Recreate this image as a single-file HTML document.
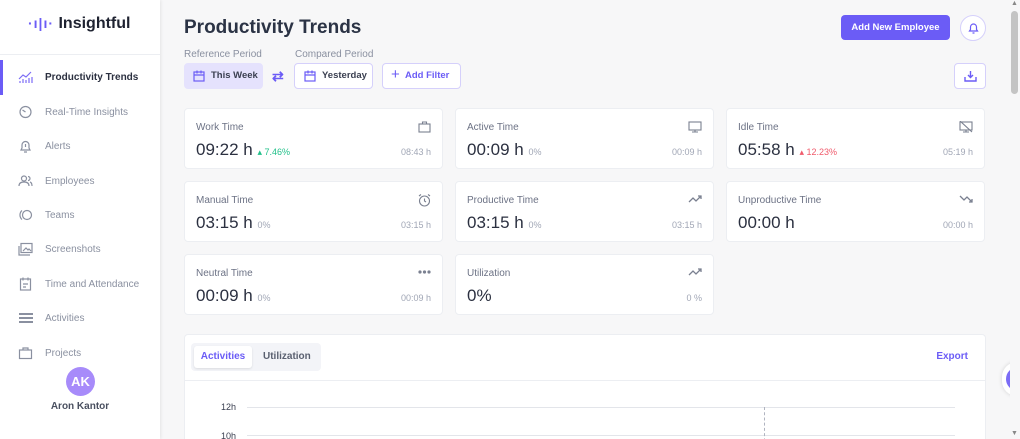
<!DOCTYPE html>
<html style="overflow:hidden;width:1020px;height:439px"><head><meta charset="utf-8"><style>
*{box-sizing:border-box;margin:0;padding:0}
body{width:1020px;height:439px;overflow:hidden;background:#f7f7f8;font-family:"Liberation Sans",sans-serif;color:#2b3040;position:relative}
.side{position:absolute;left:0;top:0;width:160px;height:439px;background:#fff;box-shadow:1px 0 3px rgba(0,0,0,.08)}
.logo{position:absolute;left:28px;top:15px;font-size:16px;font-weight:bold;color:#1e2230;white-space:nowrap}
.sep{position:absolute;left:0;top:54px;width:160px;border-top:1px solid #eceef2}
.nav{position:absolute;left:0;width:160px;height:20px;font-size:10px;color:#8a90a0;white-space:nowrap}
.nav .ic{position:absolute;left:18px;top:2px;width:15px;height:14px}
.nav span{position:absolute;left:45px;top:4px}
.act{color:#2b3040;font-weight:bold}
.bar{position:absolute;left:0;top:60px;width:3px;height:35px;background:#6b5cf6}
.av{position:absolute;left:66px;top:367px;width:29px;height:29px;border-radius:50%;background:#a78bfa;color:#fff;font-size:13px;font-weight:bold;text-align:center;line-height:29px}
.name{position:absolute;left:0;width:160px;top:401px;text-align:center;font-size:10px;font-weight:bold;color:#4a5060}
h1{position:absolute;left:184px;top:17px;font-size:19px;font-weight:bold;color:#2b3345}
.lbl{position:absolute;top:49px;font-size:10px;color:#8a90a0}
.btn{position:absolute;top:63px;height:26px;border:1px solid #d5d0fb;border-radius:4px;background:#fff;font-size:9.5px;font-weight:bold;color:#3a3f50;line-height:24px;white-space:nowrap}
.card{position:absolute;background:#fff;border:1px solid #eceef2;border-radius:4px;width:259px;height:61px}
.card .t{position:absolute;left:11px;top:13px;font-size:10px;color:#6c7285}
.card .v{position:absolute;left:11px;top:31px;font-size:17px;color:#2b3040}
.card .v small{font-size:9px;color:#a0a6b5}
.card .c{position:absolute;right:11px;top:38px;font-size:9px;color:#a0a6b5}
.card svg{position:absolute;right:11px;top:12px}
.up{color:#22c08a!important}.dn{color:#f05a6b!important}
</style></head><body>
<div class="side">
<div class="logo"><span style="color:#6b5cf6;font-size:14px;letter-spacing:1px">·ı|ı·</span> Insightful</div>
<div class="sep"></div>
<div class="bar"></div>
<div class="nav act" style="top:68px"><svg class="ic" viewBox="0 0 15 14" fill="none" stroke="#7b6cf6" stroke-width="1.2"><path d="M1 9l4-4 3 2 5-5"/><path d="M2 13v-2M5 13v-4M8 13v-3M11 13v-5M14 13v-6"/></svg><span>Productivity Trends</span></div>
<div class="nav" style="top:103px"><svg class="ic" viewBox="0 0 15 14" fill="none" stroke="#8a90a0" stroke-width="1.2"><circle cx="7.5" cy="7" r="5.5"/><path d="M7.5 7l-3-2"/></svg><span>Real-Time Insights</span></div>
<div class="nav" style="top:137px"><svg class="ic" viewBox="0 0 15 14" fill="none" stroke="#8a90a0" stroke-width="1.2"><path d="M3 11h9l-1-2V6a3.5 3.5 0 0 0-7 0v3zM6 13h3M7.5 5v3"/></svg><span>Alerts</span></div>
<div class="nav" style="top:172px"><svg class="ic" viewBox="0 0 15 14" fill="none" stroke="#8a90a0" stroke-width="1.2"><circle cx="6" cy="4.5" r="2.5"/><path d="M1 12c0-3 2-4 5-4s5 1 5 4M10 2.5a2 2 0 0 1 0 4M12 8c1.5.5 2 2 2 4"/></svg><span>Employees</span></div>
<div class="nav" style="top:206px"><svg class="ic" viewBox="0 0 15 14" fill="none" stroke="#8a90a0" stroke-width="1.2"><circle cx="9" cy="7" r="4.5"/><path d="M4 2.5a6 6 0 0 0 0 9"/></svg><span>Teams</span></div>
<div class="nav" style="top:240px"><svg class="ic" viewBox="0 0 15 14" fill="none" stroke="#8a90a0" stroke-width="1.2"><rect x="3" y="1.5" width="11" height="9"/><path d="M1 4v9h11M5 9l3-3 2 2 1-1 2 2"/></svg><span>Screenshots</span></div>
<div class="nav" style="top:275px"><svg class="ic" viewBox="0 0 15 14" fill="none" stroke="#8a90a0" stroke-width="1.2"><rect x="2.5" y="2" width="10" height="11"/><path d="M5 0.5v3M10 0.5v3M5 7h5M5 10h3"/></svg><span>Time and Attendance</span></div>
<div class="nav" style="top:309px"><svg class="ic" viewBox="0 0 15 14" fill="none" stroke="#8a90a0" stroke-width="2"><path d="M1 3h14M1 7h14M1 11h14"/></svg><span>Activities</span></div>
<div class="nav" style="top:344px"><svg class="ic" viewBox="0 0 15 14" fill="none" stroke="#8a90a0" stroke-width="1.2"><rect x="1.5" y="4" width="12" height="8.5"/><path d="M5 4V2h5v2"/></svg><span>Projects</span></div>
<div class="av">AK</div>
<div class="name">Aron Kantor</div>
</div>

<h1>Productivity Trends</h1>
<div class="lbl" style="left:184px">Reference Period</div>
<div class="lbl" style="left:295px">Compared Period</div>
<div class="btn" style="left:184px;width:79px;background:#e5e2fd;border-color:#e5e2fd;padding-left:26px">This Week<svg style="position:absolute;left:8px;top:6px" width="12" height="12" viewBox="0 0 12 12" fill="none" stroke="#6b5cf6" stroke-width="1.2"><rect x="1" y="2" width="10" height="9"/><path d="M1 5h10M4 0.5v3M8 0.5v3"/></svg></div>
<div style="position:absolute;left:272px;top:68px;color:#6b5cf6;font-size:14px;font-weight:bold">⇄</div>
<div class="btn" style="left:294px;width:79px;padding-left:27px">Yesterday<svg style="position:absolute;left:9px;top:6px" width="12" height="12" viewBox="0 0 12 12" fill="none" stroke="#6b5cf6" stroke-width="1.2"><rect x="1" y="2" width="10" height="9"/><path d="M1 5h10M4 0.5v3M8 0.5v3"/></svg></div>
<div class="btn" style="left:382px;width:79px;padding-left:22px;color:#6b5cf6"><span style="position:absolute;left:8px;top:-1px;font-size:15px;font-weight:normal">+</span>Add Filter</div>
<div style="position:absolute;left:841px;top:15px;width:109px;height:25px;background:#6b5cf6;border-radius:4px;color:#fff;font-size:9.5px;font-weight:bold;text-align:center;line-height:25px;white-space:nowrap">Add New Employee</div>
<div style="position:absolute;left:960px;top:15px;width:26px;height:26px;border-radius:50%;border:1px solid #d5d0fb;background:#fff"><svg style="position:absolute;left:7px;top:6px" width="11" height="12" viewBox="0 0 11 12" fill="none" stroke="#6b5cf6" stroke-width="1.2"><path d="M1.5 9h8l-1-1.5V5a3 3 0 0 0-6 0v2.5zM4.5 11h2"/></svg></div>
<div class="btn" style="left:954px;width:32px"><svg style="position:absolute;left:9px;top:6px" width="13" height="12" viewBox="0 0 13 12" fill="none" stroke="#6b5cf6" stroke-width="1.4"><path d="M6.5 1v6M4 5l2.5 2.5L9 5M1 7v4h11V7"/></svg></div>

<div class="card" style="left:184px;top:108px"><div class="t">Work Time</div><svg width="13" height="12" viewBox="0 0 13 12" fill="none" stroke="#7a8090" stroke-width="1.1"><rect x="1" y="3" width="11" height="8"/><path d="M4.5 3V1h4v2"/></svg><div class="v">09:22 h <small class="up">▴ 7.46%</small></div><div class="c">08:43 h</div></div>
<div class="card" style="left:455px;top:108px"><div class="t">Active Time</div><svg width="14" height="12" viewBox="0 0 14 12" fill="none" stroke="#7a8090" stroke-width="1.1"><rect x="1" y="1" width="12" height="8"/><path d="M7 9v2M4 11h6"/></svg><div class="v">00:09 h <small>0%</small></div><div class="c">00:09 h</div></div>
<div class="card" style="left:726px;top:108px"><div class="t">Idle Time</div><svg width="14" height="12" viewBox="0 0 14 12" fill="none" stroke="#7a8090" stroke-width="1.1"><rect x="1" y="1" width="12" height="8"/><path d="M7 9v2M4 11h6M1 0l12 11"/></svg><div class="v">05:58 h <small class="dn">▴ 12.23%</small></div><div class="c">05:19 h</div></div>
<div class="card" style="left:184px;top:181px"><div class="t">Manual Time</div><svg width="13" height="13" viewBox="0 0 13 13" fill="none" stroke="#7a8090" stroke-width="1.1"><circle cx="6.5" cy="7" r="5"/><path d="M6.5 4.5V7l1.5 1M1 2l2-1.5M12 2L10 .5"/></svg><div class="v">03:15 h <small>0%</small></div><div class="c">03:15 h</div></div>
<div class="card" style="left:455px;top:181px"><div class="t">Productive Time</div><svg width="14" height="10" viewBox="0 0 14 10" fill="none" stroke="#7a8090" stroke-width="1.3"><path d="M1 8l4-4 3 3 5-5M10 2h3v3"/></svg><div class="v">03:15 h <small>0%</small></div><div class="c">03:15 h</div></div>
<div class="card" style="left:726px;top:181px"><div class="t">Unproductive Time</div><svg width="14" height="10" viewBox="0 0 14 10" fill="none" stroke="#7a8090" stroke-width="1.3"><path d="M1 2l4 4 3-3 5 5M10 8h3V5"/></svg><div class="v">00:00 h</div><div class="c">00:00 h</div></div>
<div class="card" style="left:184px;top:254px"><div class="t">Neutral Time</div><svg width="13" height="10" viewBox="0 0 13 10" fill="#7a8090"><circle cx="2" cy="5" r="1.6"/><circle cx="6.5" cy="5" r="1.6"/><circle cx="11" cy="5" r="1.6"/></svg><div class="v">00:09 h <small>0%</small></div><div class="c">00:09 h</div></div>
<div class="card" style="left:455px;top:254px"><div class="t">Utilization</div><svg width="14" height="10" viewBox="0 0 14 10" fill="none" stroke="#7a8090" stroke-width="1.3"><path d="M1 8l4-4 3 3 5-5M10 2h3v3"/></svg><div class="v">0%</div><div class="c">0 %</div></div>

<div style="position:absolute;left:184px;top:334px;width:802px;height:105px;background:#fff;border:1px solid #eceef2;border-bottom:none;border-radius:4px 4px 0 0;overflow:hidden">
<div style="position:absolute;left:6px;top:8px;width:130px;height:28px;background:#f3f4f8;border-radius:4px"></div>
<div style="position:absolute;left:9px;top:11px;width:58px;height:22px;background:#fff;border-radius:3px;box-shadow:0 1px 2px rgba(0,0,0,.1);color:#6b5cf6;font-size:10px;font-weight:bold;text-align:center;line-height:22px">Activities</div>
<div style="position:absolute;left:78px;top:11px;font-size:10px;font-weight:bold;color:#5a6070;line-height:22px">Utilization</div>
<div style="position:absolute;right:17px;top:11px;font-size:10px;font-weight:bold;color:#6b5cf6;line-height:22px">Export</div>
<div style="position:absolute;left:0;top:45px;width:800px;border-top:1px solid #eceef2"></div>
<div style="position:absolute;left:36px;top:67px;font-size:9px;color:#3a3f50">12h</div>
<div style="position:absolute;left:36px;top:96px;font-size:9px;color:#3a3f50">10h</div>
<div style="position:absolute;left:62px;top:72px;width:708px;border-top:1px solid #e3e5ea"></div>
<div style="position:absolute;left:62px;top:100px;width:708px;border-top:1px solid #e3e5ea"></div>
<div style="position:absolute;left:579px;top:72px;height:50px;border-left:1px dashed #b0b4c0"></div>
</div>
<div style="position:absolute;left:1002px;top:362px;width:30px;height:34px;border-radius:17px;background:#fff;box-shadow:0 0 4px rgba(0,0,0,.15)"><div style="position:absolute;left:4px;top:5px;width:24px;height:24px;border-radius:50%;background:#7b6cf6"></div></div>
<div style="position:absolute;left:1010px;top:0;width:10px;height:439px;background:#f7f7f8"></div>
<div style="position:absolute;left:1011px;top:11px;width:7px;height:83px;background:#c4c4c4;border-radius:4px"></div>
<div style="position:absolute;left:1011px;top:0;font-size:7px;color:#888">▲</div>
<div style="position:absolute;left:1011px;top:430px;font-size:7px;color:#888">▼</div>
</body></html>
